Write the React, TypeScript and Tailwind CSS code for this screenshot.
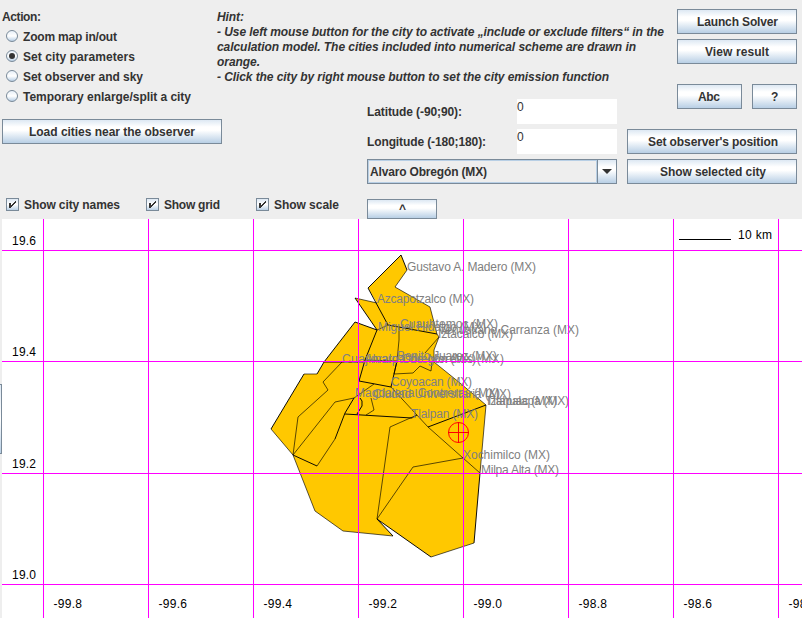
import React from "react";

const BTN =
  "flex shrink-0 items-center justify-center border border-[#7a8a99] bg-[linear-gradient(to_bottom,#dde8f3_0%,#ffffff_30%,#ffffff_45%,#b8cfe5_100%)] text-[#333333]";

function Button({ className, label, w }: { className: string; label: string; w: number }) {
  return (
    <button className={`${BTN} ${className}`}>
      <Fit text={label} w={w} />
    </button>
  );
}

/* Text run stretched to a fixed advance width. */
function Fit({ text, w, italic = false }: { text: string; w: number; italic?: boolean }) {
  return (
    <svg width={w} height={15} className="block shrink-0 overflow-visible">
      <text x={0} y={12} textLength={w} fill="#333333" fontStyle={italic ? "italic" : "normal"}>
        {text}
      </text>
    </svg>
  );
}

function Radio({ label, w, checked = false }: { label: string; w: number; checked?: boolean }) {
  return (
    <label className="flex h-5 items-center pl-1.5">
      <span className="mr-[5px] flex size-3 items-center justify-center rounded-full border border-[#7a8a99] bg-linear-to-b from-[#e8f0f8] via-white to-[#b8cfe5]">
        {checked && <span className="size-1.5 rounded-full bg-[#333333]" />}
      </span>
      <Fit text={label} w={w} />
    </label>
  );
}

function Check({ label, w, className }: { label: string; w: number; className: string }) {
  return (
    <label className={`flex h-[15px] shrink-0 items-center ${className}`}>
      <span className="mr-[5px] size-[13px] border border-[#7a8a99] bg-linear-to-b from-[#dde8f3] via-white to-[#b8cfe5]">
        <svg width="11" height="11" className="block" shapeRendering="crispEdges">
          <path d="M2 4h2v2h1v-1h1v-1h1v-1h1v-1h1v2h-1v1h-1v1h-1v1h-1v1h-1v1h-2z" fill="#333333" />
        </svg>
      </span>
      <Fit text={label} w={w} />
    </label>
  );
}

const GRID_X = [43, 148, 253, 358, 463, 568, 673, 778];
const GRID_Y = [250, 361, 473, 584];

const OUTLINE =
  "401,255 407,270 395,287 430,307 437,334 439,337 434,350 434,362 460,383 486,405 480,473 474,543 431,557 377,519 393,536 343,531 315,511 293,455 271,429 304,374 317,374 324,362 355,322 377,330 355,298 377,303 368,288";

const DARK = [
  "401,255 407,270",
  "401,255 368,288 388,325",
  "377,330 355,298",
  "388,325 437,334",
  "324,362 355,322 377,330 365,360 359,381",
  "324,362 364,362",
  "317,374 324,362",
  "304,374 271,429",
  "359,381 391,387 397,361",
  "360,398 362,401 362,406 357,414",
  "354,398 345,413 335,439",
  "293,455 317,466",
  "345,414 412,418",
  "428,427 486,405",
  "377,519 431,557",
  "377,519 393,536",
  "480,473 474,543",
];

const THIN = [
  "407,270 395,287 430,307 437,334",
  "355,298 377,303",
  "377,330 388,325",
  "437,334 439,337 425,353",
  "439,337 434,350 434,362 460,383 486,405 480,473",
  "399,328 399,340 397,361 394,374 413,373 420,366 431,371 432,362",
  "365,360 397,361",
  "304,374 317,374",
  "271,429 293,455 298,417 328,390 323,382 342,362",
  "293,455 335,402 354,398 374,384",
  "335,439 317,466",
  "371,398 374,410 366,415",
  "391,387 428,427 463,458 480,473",
  "412,418 417,415 390,427 377,519 413,467 463,458",
  "474,543 431,557",
  "393,536 343,531 315,511 293,455",
];

const CITIES: [string, number, number, number][] = [
  ["Gustavo A. Madero (MX)", 407, 271, 129],
  ["Azcapotzalco (MX)", 377, 303, 97],
  ["Cuauhtemoc (MX)", 400, 328, 98],
  ["Miguel Hidalgo (MX)", 378, 331, 108],
  ["Venustiano Carranza (MX)", 438, 334, 141],
  ["Iztacalco (MX)", 438, 338, 75],
  ["Benito Juarez (MX)", 397, 360, 100],
  ["Cuajimalpa de Morelos (MX)", 342, 363, 162],
  ["Alvaro Obregón (MX)", 365, 363, 111],
  ["Coyoacan (MX)", 391, 386, 81],
  ["Magdalena Contreras (MX)", 355, 397, 145],
  ["Ciudad Universitaria (MX)", 373, 398, 138],
  ["Tlahuac (MX)", 486, 405, 71],
  ["Iztapalapa (MX)", 487, 405, 82],
  ["Tlalpan (MX)", 411, 418, 67],
  ["Xochimilco (MX)", 463, 459, 87],
  ["Milpa Alta (MX)", 481, 474, 78],
];

function CityMap() {
  return (
    <svg
      width="800"
      height="399"
      viewBox="2 219 800 399"
      className="block shrink-0 bg-white font-normal"
    >
      <polygon points={OUTLINE} fill="#ffc800" />
      <g fill="none" stroke="#000000">
        {DARK.map((p) => (
          <polyline key={p} points={p} strokeWidth="0.95" />
        ))}
        {THIN.map((p) => (
          <polyline key={p} points={p} strokeWidth="0.65" />
        ))}
      </g>
      <g fill="#808080">
        {CITIES.map(([name, x, y, w]) => (
          <text key={name} x={x} y={y} textLength={w}>
            {name}
          </text>
        ))}
      </g>
      <g fill="#ff00ff" shapeRendering="crispEdges">
        {GRID_X.map((x) => (
          <rect key={x} x={x} y="219" width="1" height="399" />
        ))}
        {GRID_Y.map((y) => (
          <rect key={y} x="2" y={y} width="800" height="1" />
        ))}
      </g>
      <g fill="#000000">
        {["19.6", "19.4", "19.2", "19.0"].map((t, i) => (
          <text key={t} x="12" y={[245, 356, 468, 579][i]} textLength="24">
            {t}
          </text>
        ))}
        {["-99.8", "-99.6", "-99.4", "-99.2", "-99.0", "-98.8", "-98.6", "-98.4"].map((t, i) => (
          <text key={t} x={53.5 + i * 105} y="608" textLength="28.5">
            {t}
          </text>
        ))}
        <text x="738" y="239" textLength="34">
          10 km
        </text>
        <rect x="679" y="239" width="52" height="1" shapeRendering="crispEdges" />
      </g>
      <g fill="none" stroke="#ff0000">
        <circle cx="458.5" cy="432.5" r="10" />
        <path d="M448 432.5h21M458.5 422v21" />
      </g>
    </svg>
  );
}

export default function App() {
  return (
    <div className="h-[618px] w-[802px] overflow-hidden bg-[#eeeeee] font-['Liberation_Sans',Arial,sans-serif] text-[12px] leading-[15px] font-bold text-[#333333]">
      <div className="flex h-[184px]">
        <section className="w-[217px] shrink-0 pt-[9px] pl-0.5">
          <Fit text="Action:" w={39} />
          <div className="-ml-0.5 pt-0.5">
            <Radio label="Zoom map in/out" w={94} />
            <Radio label="Set city parameters" w={112} checked />
            <Radio label="Set observer and sky" w={120} />
            <Radio label="Temporary enlarge/split a city" w={168} />
          </div>
          <Button label="Load cities near the observer" w={166} className="mt-[13px] h-[25px] w-[220px]" />
        </section>

        <section className="w-[400px] shrink-0 pt-[9px]">
          <Fit italic text="Hint:" w={27} />
          <Fit italic text="- Use left mouse button for the city to activate „include or exclude filters“ in the" w={447} />
          <Fit italic text="calculation model. The cities included into numerical scheme are drawn in" w={419} />
          <Fit italic text="orange." w={43} />
          <Fit italic text="- Click the city by right mouse button to set the city emission function" w={392} />
          <div className="mt-[15px] ml-[150px] flex flex-col gap-[5px]">
            <div className="flex h-[25px] items-center justify-between">
              <Fit text="Latitude (-90;90):" w={95} />
              <div className="h-[25px] w-[100px] bg-white font-normal">
                <Fit text="0" w={7} />
              </div>
            </div>
            <div className="flex h-[25px] items-center justify-between">
              <Fit text="Longitude (-180;180):" w={119} />
              <div className="h-[25px] w-[100px] bg-white font-normal">
                <Fit text="0" w={7} />
              </div>
            </div>
            <div className="flex h-[25px] border border-[#7a8a99]">
              <div className="flex flex-1 items-center border border-[#b8cfe5] pl-px">
                <Fit text="Alvaro Obregón (MX)" w={117} />
              </div>
              <div className="flex w-[19px] items-center justify-center border-l border-[#7a8a99] bg-[linear-gradient(to_bottom,#dde8f3_0%,#ffffff_30%,#ffffff_45%,#b8cfe5_100%)]">
                <svg width="10" height="5">
                  <path d="M0 0H10L5 5z" fill="#333333" />
                </svg>
              </div>
            </div>
          </div>
        </section>

        <section className="flex w-[180px] shrink-0 flex-col items-end gap-[5px] pt-[9px]">
          <Button label="Launch Solver" w={81} className="h-[25px] w-[120px]" />
          <Button label="View result" w={64} className="h-[25px] w-[120px]" />
          <div className="my-[15px] flex gap-2.5">
            <Button label="Abc" w={22} className="h-[25px] w-[65px] pr-0.5" />
            <Button label="?" w={7} className="h-[25px] w-[45px]" />
          </div>
          <Button label="Set observer's position" w={130} className="h-[25px] w-[170px] pl-0.5" />
          <Button label="Show selected city" w={106} className="h-[25px] w-[170px] pl-0.5" />
        </section>
      </div>

      <div className="flex h-[35px] items-end pl-1.5">
        <Check label="Show city names" w={96} className="mb-[7px] w-[140px]" />
        <Check label="Show grid" w={56} className="mb-[7px] w-[110px]" />
        <Check label="Show scale" w={65} className="mb-[7px] w-[111px]" />
        <Button label="^" w={7} className="h-5 w-[70px] pb-0.5" />
      </div>

      <div className="flex">
        <div className="w-0.5 shrink-0 pt-[165px]">
          <div className="h-[70px] border-y border-r border-[#7a8a99] bg-linear-to-b from-[#dde8f3] via-white to-[#b8cfe5]" />
        </div>
        <CityMap />
      </div>
    </div>
  );
}
